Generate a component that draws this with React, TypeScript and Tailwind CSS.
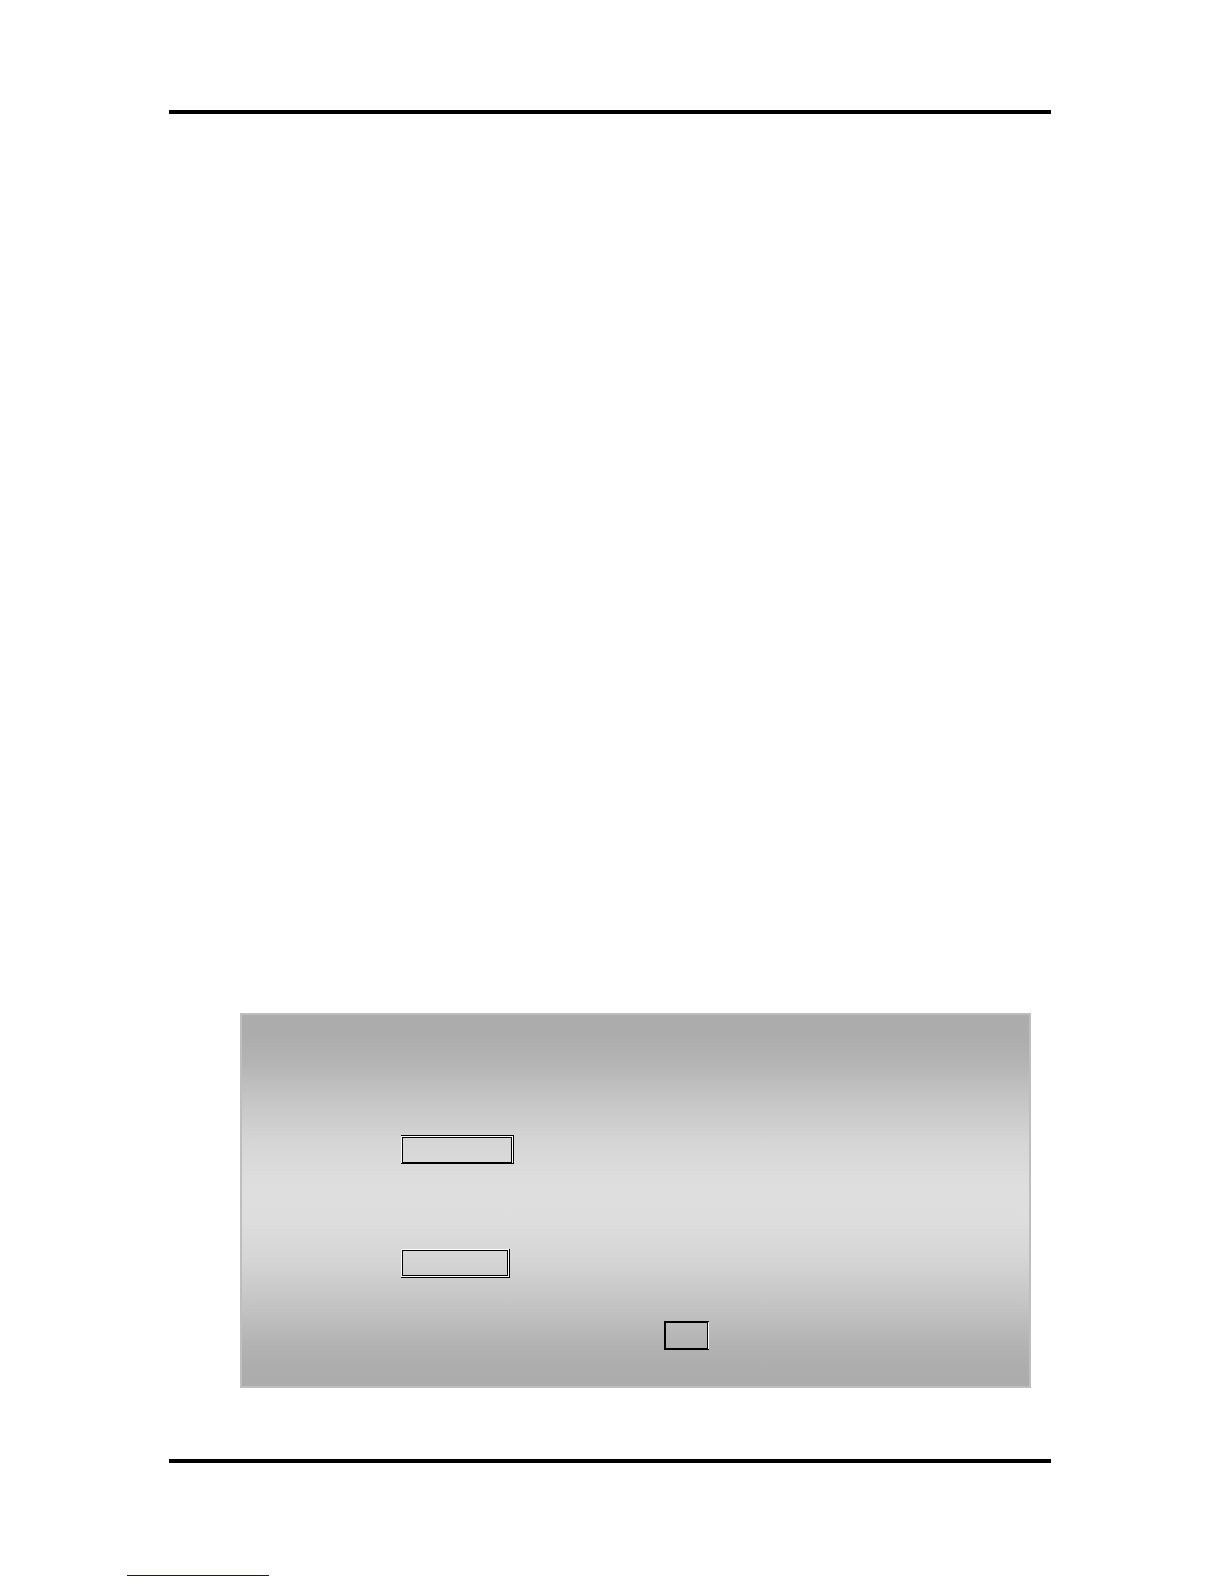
import type { ReactNode } from "react";

function Rule() {
  return <hr className="h-1 border-0 bg-black" />;
}

function Panel({ children }: { children: ReactNode }) {
  return (
    <section className="mr-5 ml-[71px] flex flex-col items-start border-2 border-[#bebebe] bg-[linear-gradient(to_bottom,#acacac_0%,#adadad_6%,#b4b4b4_13%,#c4c4c4_22%,#d5d5d5_34%,#dddddd_44%,#dedede_50%,#dddddd_56%,#d5d5d5_66%,#c4c4c4_78%,#b4b4b4_88%,#adadad_95%,#acacac_100%)] pt-[120px] pb-9">
      {children}
    </section>
  );
}

export default function App() {
  return (
    <div className="min-h-screen bg-white pt-[110px] pb-2 pl-[127px]">
      <main className="mr-[173px] ml-[42px]">
        <Rule />
        <div className="h-[899px]" />
        <Panel>
          <div className="ml-[159px] flex h-[29px] w-[113px] border-t border-r border-b border-black">
            <div className="flex flex-1 border-t border-r border-l border-white">
              <div className="flex-1 border border-black" />
            </div>
          </div>
          <div className="mt-[85px] ml-[159px] flex h-[29px] w-[109px] border-r border-b border-black">
            <div className="flex flex-1 border border-white">
              <div className="flex-1 border border-black" />
            </div>
          </div>
          <div className="mt-[43px] ml-[422px] flex h-[29px] w-[45px] border-t border-b border-black">
            <div className="flex flex-1 border-r border-white">
              <div className="flex-1 border border-l-2 border-black" />
            </div>
          </div>
        </Panel>
        <div className="h-[71px]" />
        <Rule />
      </main>
      <footer className="pt-28">
        <hr className="h-px w-[142px] border-0 bg-[#10108f]" />
      </footer>
    </div>
  );
}
